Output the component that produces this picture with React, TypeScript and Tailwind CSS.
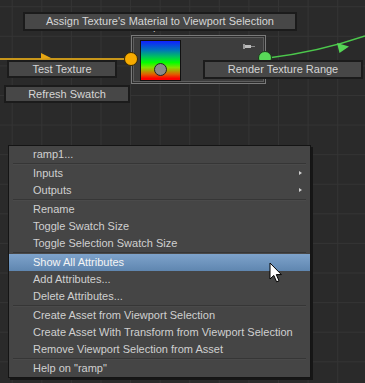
import React from 'react';

type Entry = { label: string; sub?: boolean; active?: boolean } | 'sep';

const entries: Entry[] = [
  { label: 'ramp1...' },
  'sep',
  { label: 'Inputs', sub: true },
  { label: 'Outputs', sub: true },
  'sep',
  { label: 'Rename' },
  { label: 'Toggle Swatch Size' },
  { label: 'Toggle Selection Swatch Size' },
  'sep',
  { label: 'Show All Attributes', active: true },
  { label: 'Add Attributes...' },
  { label: 'Delete Attributes...' },
  'sep',
  { label: 'Create Asset from Viewport Selection' },
  { label: 'Create Asset With Transform from Viewport Selection' },
  { label: 'Remove Viewport Selection from Asset' },
  'sep',
  { label: 'Help on "ramp"' },
];

const Chip: React.FC<{ className: string; children: React.ReactNode }> = ({ className, children }) => (
  <div
    className={`absolute flex items-center justify-center border-2 border-[#1b1b1b] bg-[#474747] text-[11px] leading-none text-[#d6d6d6] ${className}`}
  >
    {children}
  </div>
);

export default function App() {
  return (
    <div
      className="relative w-[365px] h-[383px] overflow-hidden bg-[#2a2a2a] bg-[linear-gradient(to_right,#343434_1px,transparent_1px),linear-gradient(to_bottom,#343434_1px,transparent_1px)] bg-size-[29.6px_29.6px] bg-position-[11.7px_6.2px] select-none"
      style={{ fontFamily: '"Liberation Sans", Arial, sans-serif' }}
    >
      {/* wires */}
      <svg className="absolute inset-0" width="365" height="383">
        <line x1="0" y1="59" x2="128" y2="59" stroke="#c8961a" strokeWidth="2" />
        <polygon points="41,53 51,58 41,59" fill="#e6a512" />
        <path d="M 268 58 Q 318 52 365 36" fill="none" stroke="#4cc84c" strokeWidth="1.6" />
        <polygon points="337,43 349,46.5 339.5,53" fill="#55d655" />
      </svg>

      {/* node title, mostly hidden behind the hover button */}
      <div className="absolute left-[134px] top-[20px] text-[11px] leading-[13px] text-[#c8c8c8]">ramp1</div>

      {/* node */}
      <div className="absolute left-[131px] top-[35px] w-[135px] h-[49px] border border-[#7a7a7a] bg-[#3d3d3d] shadow-[inset_0_0_0_1px_#2c2c2c,inset_0_0_0_2px_#5e5e5e] pl-[8px] pt-[4px]">
        <div className="relative w-[41px] h-[41px] border border-[#111] bg-[linear-gradient(to_bottom,#1020ff_0%,#0070c0_22%,#00c060_40%,#00ff00_55%,#80e000_68%,#e06000_85%,#ff0000_96%)]">
          <div className="absolute left-[13px] top-[22px] w-[13px] h-[13px] rounded-full bg-[#8a8a8a] border border-[#222]" />
        </div>
        <svg className="absolute left-[110px] top-[7px]" width="14" height="7" viewBox="0 0 14 7">
          <rect x="1" y="1" width="2" height="5" fill="#9a9a9a" />
          <rect x="3" y="2" width="6" height="3" fill="#bdbdbd" />
          <line x1="9" y1="3.5" x2="13" y2="3.5" stroke="#8a8a8a" strokeWidth="1" />
        </svg>
      </div>

      {/* ports */}
      <div className="absolute left-[124px] top-[52px] w-[14px] h-[14px] rounded-full bg-[#f7ab00] border border-[#3a2a00]" />
      <div className="absolute left-[258px] top-[51px] w-[14px] h-[14px] rounded-full bg-[#58d858] border border-[#1c3a1c]" />

      {/* hover buttons */}
      <Chip className="left-[23px] top-[12px] w-[274px] h-[19px]">Assign Texture's Material to Viewport Selection</Chip>
      <Chip className="left-[7px] top-[60px] w-[110px] h-[18px]">Test Texture</Chip>
      <Chip className="left-[4px] top-[85px] w-[126px] h-[18px]">Refresh Swatch</Chip>
      <Chip className="left-[203px] top-[60px] w-[160px] h-[19px]">Render Texture Range</Chip>

      {/* context menu */}
      <div className="absolute left-[8px] top-[145px] w-[303px] border border-[#141414] bg-[#454545] shadow-[2px_2px_0_#161616] flex flex-col text-[11px] text-[#d0d0d0]">
        {entries.map((e, i) =>
          e === 'sep' ? (
            <div key={i} className="h-[2px] mx-[4px] border-t border-[#363636] border-b border-b-[#4a4a4a]" />
          ) : (
            <div
              key={i}
              className={`relative h-[17px] flex items-center pl-[24px] leading-none ${
                e.active ? 'bg-[linear-gradient(to_bottom,#7ea3cb,#5f86b0)] text-[#f4f4f4]' : ''
              }`}
            >
              {e.label}
              {e.sub && (
                <span className="absolute left-[290px] top-[6px] w-0 h-0 border-y-[2.5px] border-y-transparent border-l-[3px] border-l-[#cfcfcf]" />
              )}
            </div>
          )
        )}
      </div>

      {/* mouse cursor */}
      <svg className="absolute left-[269px] top-[262px]" width="14" height="22" viewBox="0 0 14 22">
        <path
          d="M1 1 L1 17 L4.8 13.4 L7.6 19.8 L10 18.8 L7.3 12.6 L12.4 12.6 Z"
          fill="#ffffff"
          stroke="#000000"
          strokeWidth="1"
          strokeLinejoin="miter"
        />
      </svg>
    </div>
  );
}
